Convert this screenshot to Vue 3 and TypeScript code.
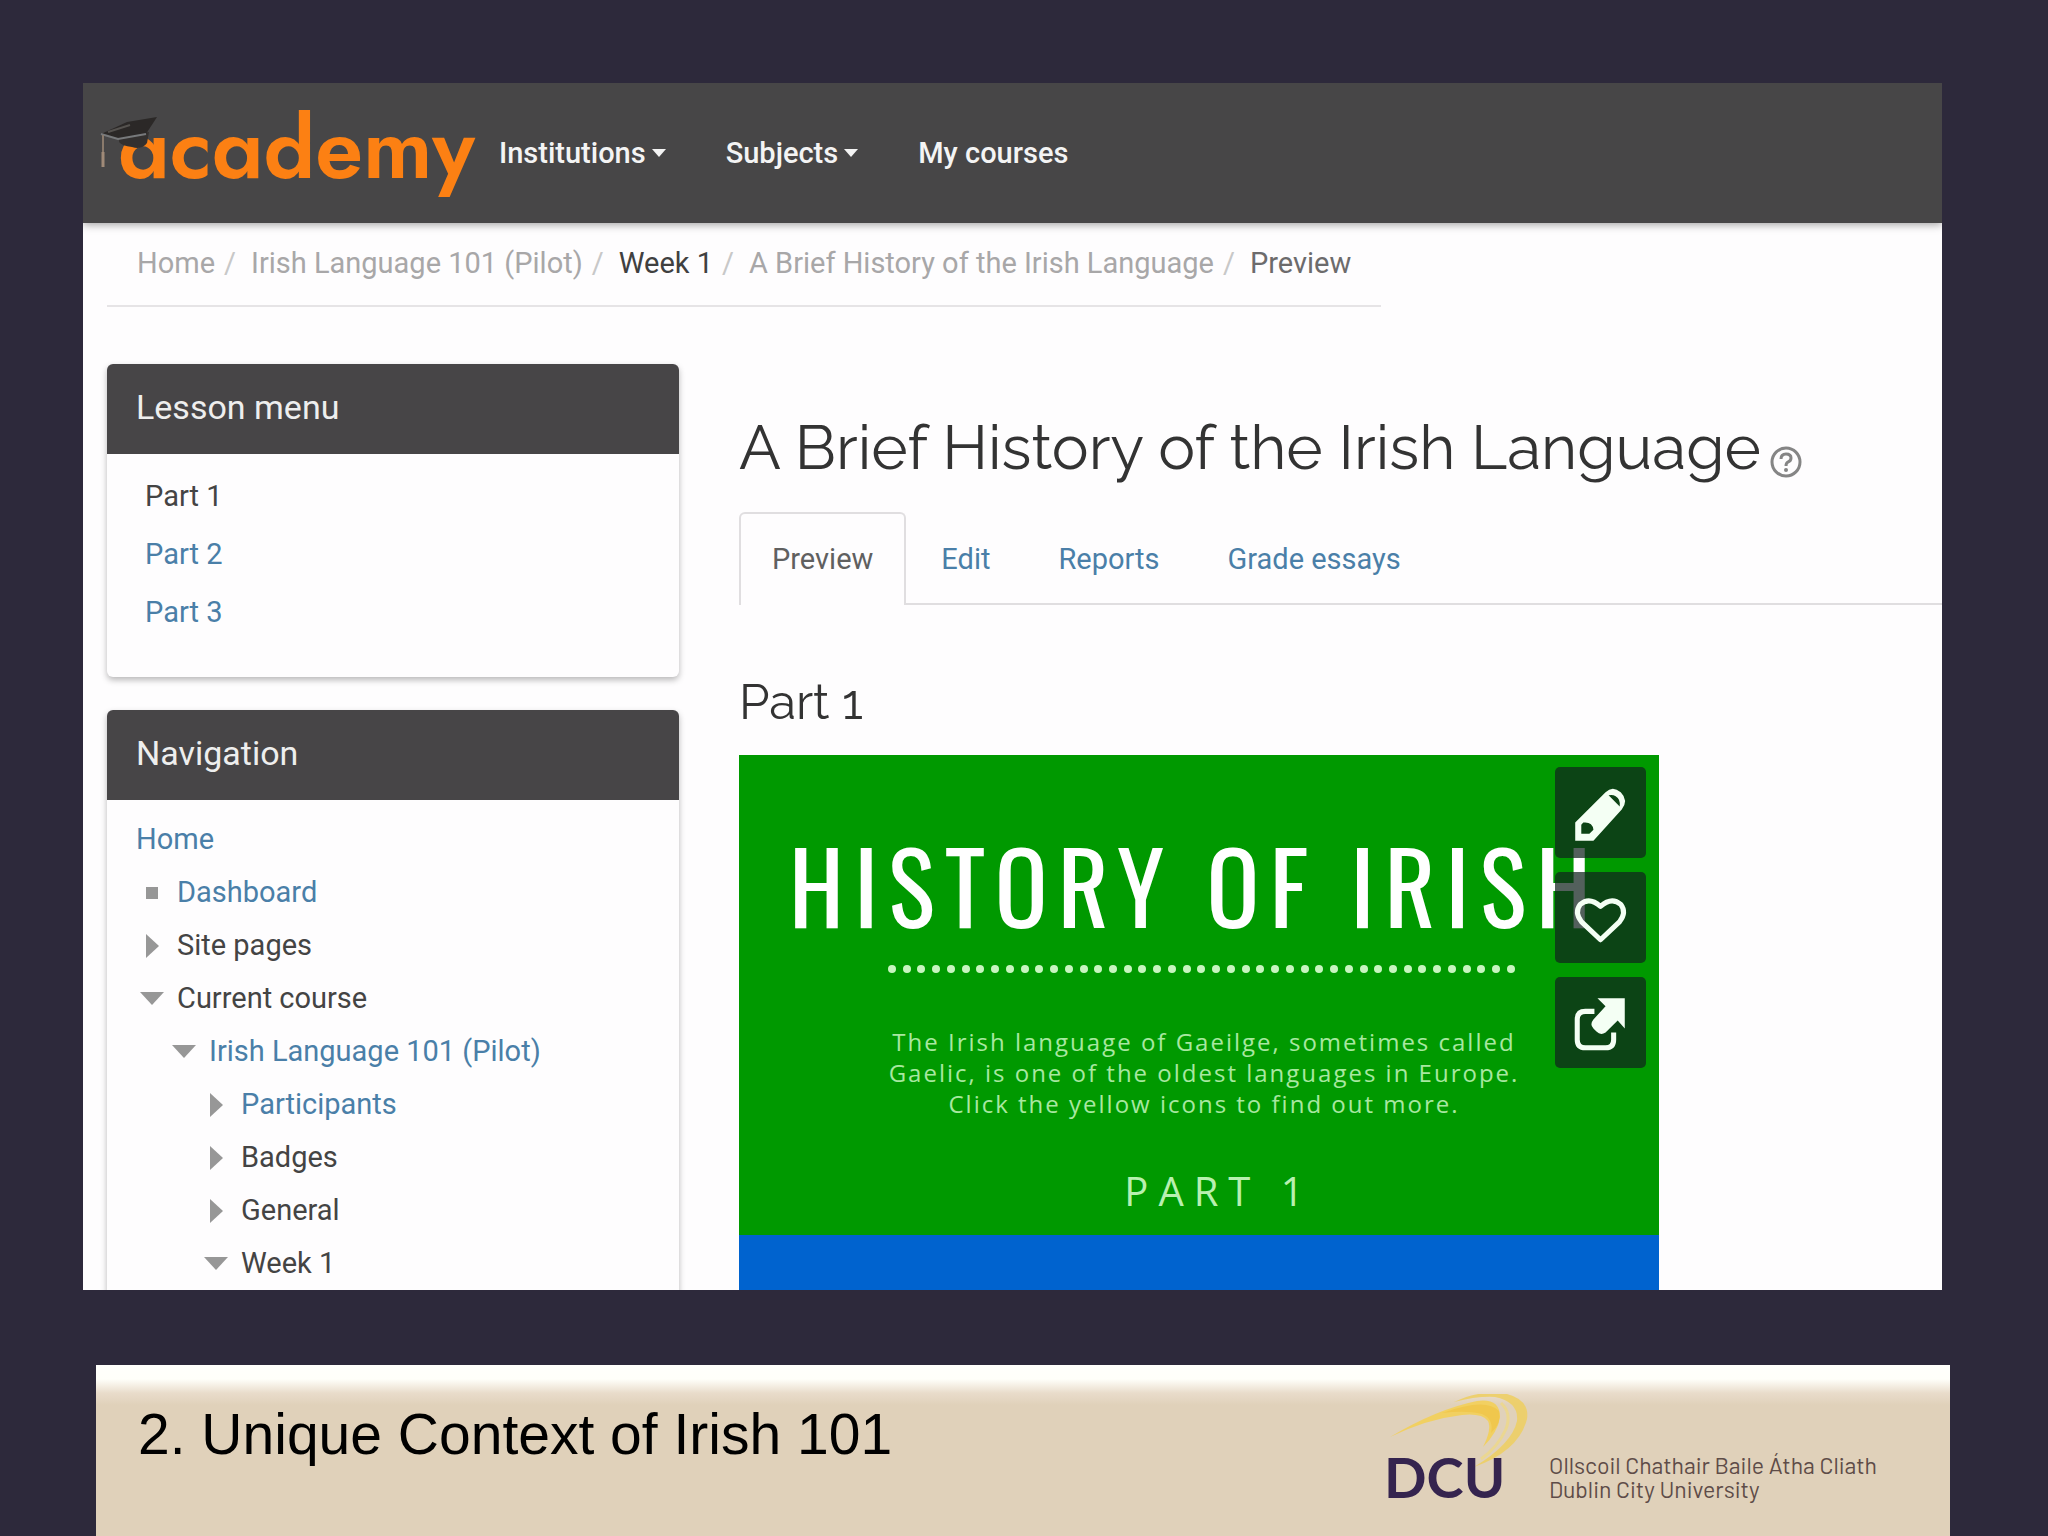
<script setup lang="ts">
interface MenuItem {
  label: string
  caret: boolean
}

interface Crumb {
  label: string
  tone: 'muted' | 'strong' | 'current'
}

interface TreeItem {
  label: string
  level: number
  marker: 'none' | 'square' | 'closed' | 'open'
  link: boolean
}

const menu: MenuItem[] = [
  { label: 'Institutions', caret: true },
  { label: 'Subjects', caret: true },
  { label: 'My courses', caret: false },
]

const crumbs: Crumb[] = [
  { label: 'Home', tone: 'muted' },
  { label: 'Irish Language 101 (Pilot)', tone: 'muted' },
  { label: 'Week 1', tone: 'strong' },
  { label: 'A Brief History of the Irish Language', tone: 'muted' },
  { label: 'Preview', tone: 'current' },
]

const parts = ['Part 1', 'Part 2', 'Part 3']
const tabs = ['Preview', 'Edit', 'Reports', 'Grade essays']

const tree: TreeItem[] = [
  { label: 'Home', level: 0, marker: 'none', link: true },
  { label: 'Dashboard', level: 0, marker: 'square', link: true },
  { label: 'Site pages', level: 0, marker: 'closed', link: false },
  { label: 'Current course', level: 0, marker: 'open', link: false },
  { label: 'Irish Language 101 (Pilot)', level: 1, marker: 'open', link: true },
  { label: 'Participants', level: 2, marker: 'closed', link: true },
  { label: 'Badges', level: 2, marker: 'closed', link: false },
  { label: 'General', level: 2, marker: 'closed', link: false },
  { label: 'Week 1', level: 2, marker: 'open', link: false },
]
</script>

<template>
  <div class="slide">
    <section class="frame">
      <header class="topbar">
        <a href="#" class="brand" aria-label="academy">
          <span class="wordmark">academy</span>
          <svg class="cap" viewBox="0 0 60 54" aria-hidden="true">
            <path d="M19 22 L49 16 L47 27 Q42 34 32 31 Q22 30 19 26 Z" fill="#33302f" />
            <path d="M1 18 L27 6 L57 1 L46 18 L18 23 Z" fill="#2b2827" />
            <path d="M1 18 L18 23 L46 18" fill="none" stroke="#77797b" stroke-width="2" />
            <path d="M8 16 L30 9" stroke="#55524f" stroke-width="2" />
            <path d="M3 19 V50" stroke="#8a7a6c" stroke-width="2" />
            <path d="M3 36 V51" stroke="#a08a78" stroke-width="3" />
          </svg>
        </a>
        <nav class="menu">
          <a v-for="item in menu" :key="item.label" href="#">
            {{ item.label }}<i v-if="item.caret" class="caret"></i>
          </a>
        </nav>
      </header>

      <nav class="crumbs" aria-label="Breadcrumb">
        <template v-for="(crumb, i) in crumbs" :key="crumb.label">
          <span v-if="i > 0" class="sep">/</span>
          <a href="#" :class="crumb.tone">{{ crumb.label }}</a>
        </template>
      </nav>

      <div class="columns">
        <aside class="sidebar">
          <section class="card">
            <h2>Lesson menu</h2>
            <ul class="parts">
              <li v-for="(part, i) in parts" :key="part">
                <span v-if="i === 0">{{ part }}</span>
                <a v-else href="#">{{ part }}</a>
              </li>
            </ul>
          </section>
          <section class="card">
            <h2>Navigation</h2>
            <ul class="tree">
              <li v-for="(item, i) in tree" :key="i" :class="'level-' + item.level">
                <span v-if="item.marker !== 'none'" class="marker"><i :class="item.marker"></i></span>
                <a v-if="item.link" href="#">{{ item.label }}</a>
                <span v-else>{{ item.label }}</span>
              </li>
            </ul>
          </section>
        </aside>

        <main class="content">
          <h1>
            A Brief History of the Irish Language
            <button class="help" aria-label="Help">
              <svg viewBox="0 0 34 34" aria-hidden="true">
                <circle cx="17" cy="17" r="14" fill="none" stroke="#858585" stroke-width="3" />
                <path d="M12 14 Q12 9 17 9 Q22 9 22 13 Q22 16 19 17 Q17 18 17 21" fill="none" stroke="#858585" stroke-width="3" />
                <circle cx="17" cy="25" r="2" fill="#858585" />
              </svg>
            </button>
          </h1>

          <nav class="tabs">
            <a v-for="(tab, i) in tabs" :key="tab" href="#" :class="{ active: i === 0 }">{{ tab }}</a>
          </nav>

          <h3>Part 1</h3>

          <article class="poster">
            <div class="poster-main">
              <p class="poster-title">HISTORY OF IRISH</p>
              <div class="dots"><i v-for="n in 43" :key="n"></i></div>
              <p class="poster-text">
                The Irish language of Gaeilge, sometimes called<br />
                Gaelic, is one of the oldest languages in Europe.<br />
                Click the yellow icons to find out more.
              </p>
              <p class="poster-part">PART 1</p>
            </div>
            <div class="tools">
              <button aria-label="Edit">
                <svg viewBox="0 0 90 90" aria-hidden="true">
                  <path fill="#f4fff4" fill-rule="evenodd" d="M20 73 V55 L50 25 Q57 18 65 25 Q73 33 66 42 L38 73 Z M26 66 H34 L38 62 Q37 54 28 55 L26 57 Z M53 28 L64 39 Q65 32 60 29 Q57 27 53 28 Z" />
                </svg>
              </button>
              <button aria-label="Like">
                <svg viewBox="0 0 90 90" aria-hidden="true">
                  <path d="M45 67 L26 49 Q19 40 25 32 Q34 24 45 34 Q56 24 65 32 Q71 40 64 49 Z" fill="none" stroke="#f4fff4" stroke-width="5" stroke-linejoin="round" />
                </svg>
              </button>
              <button aria-label="Share">
                <svg viewBox="0 0 90 90" aria-hidden="true">
                  <path d="M39 34 H30 Q22 34 22 42 V62 Q22 70 30 70 H50 Q58 70 58 62 V55" fill="none" stroke="#f4fff4" stroke-width="5" />
                  <path d="M42 21 H69 V51 L62 43 L50 55 Q45 58 41 54 L38 51 Q34 47 38 42 L50 29 Z" fill="#f4fff4" />
                </svg>
              </button>
            </div>
          </article>
        </main>
      </div>
    </section>

    <footer class="caption">
      <p class="caption-title">2. Unique Context of Irish 101</p>
      <div class="university">
        <svg class="emblem" viewBox="0 5 150 124" role="img" aria-label="DCU">
          <g opacity="0.85">
            <path d="M8 48 Q55 20 95 12 Q118 9 118 28 Q116 43 101 58 Q110 40 106 32 Q100 24 80 26 Q45 30 8 48 Z" fill="#f5d052" />
            <path d="M60 24 Q104 8 117 22 Q120 34 109 44 Q112 30 100 25 Q84 21 60 24 Z" fill="#f3c63a" />
            <path d="M72 13 Q100 0 125 5 Q148 11 145 30 Q137 62 92 78 Q130 55 135 32 Q137 13 113 8 Q95 7 72 13 Z" fill="#efcf60" />
            <path d="M119 14 Q130 24 124 40 Q116 58 99 70" fill="none" stroke="#eed98a" stroke-width="3" />
          </g>
          <text x="2" y="109" class="dcu">DCU</text>
        </svg>
        <p class="names">Ollscoil Chathair Baile Átha Cliath<br />Dublin City University</p>
      </div>
    </footer>
  </div>
</template>

<style>
body {
  margin: 0;
  background: #2d293b;
}
</style>

<style scoped>
* {
  box-sizing: border-box;
}

h1, h2, h3, p, ul {
  margin: 0;
  padding: 0;
  font-weight: 400;
}

ul {
  list-style: none;
}

a {
  color: #4a7fa8;
  text-decoration: none;
}

button {
  border: 0;
  padding: 0;
  background: none;
}

.slide {
  display: flex;
  flex-direction: column;
  height: 100vh;
  padding-top: 83px;
  background: #2d293b;
  font-family: Roboto, "Liberation Sans", sans-serif;
  font-size: 29px;
  line-height: 40px;
  color: #444;
}

.frame {
  flex: 1;
  min-height: 0;
  margin: 0 106px 75px 83px;
  overflow: hidden;
  background: #fefdfe;
}

.topbar {
  display: flex;
  align-items: center;
  height: 140px;
  padding-left: 35px;
  background: #474647;
  box-shadow: 0 2px 8px rgba(0, 0, 0, 0.35);
}

.brand {
  position: relative;
  width: 381px;
  padding-bottom: 10px;
}

.wordmark {
  font-family: Jost, Inter, sans-serif;
  font-size: 86px;
  font-weight: 600;
  line-height: 100px;
  font-feature-settings: "ss01", "cv11";
  color: #fc8013;
}

.cap {
  position: absolute;
  left: -18px;
  top: 18px;
  width: 60px;
  height: 54px;
}

.menu {
  display: flex;
  gap: 60px;
}

.menu a {
  display: flex;
  align-items: center;
  gap: 6px;
  color: #f4f4f4;
  font-weight: 500;
}

.caret {
  border: 7px solid transparent;
  border-top: 8px solid #f4f4f4;
  border-bottom: 0;
}

.crumbs {
  display: flex;
  width: fit-content;
  margin-left: 24px;
  padding: 20px 30px 22px;
  border-bottom: 2px solid #e6e4e6;
}

.crumbs .sep {
  margin: 0 15px 0 9px;
  color: #c8c8c8;
}

.crumbs .muted {
  color: #a8a7a8;
}

.crumbs .strong {
  color: #404040;
}

.crumbs .current {
  color: #6c6b6c;
}

.columns {
  display: grid;
  grid-template-columns: 572px 1fr;
  gap: 60px;
  padding: 57px 0 0 24px;
}

.sidebar {
  display: flex;
  flex-direction: column;
  gap: 33px;
}

.card {
  border-radius: 6px;
  background: #fefdfe;
  box-shadow: 0 3px 6px rgba(0, 0, 0, 0.28);
}

.card h2 {
  height: 90px;
  padding-left: 29px;
  border-radius: 6px 6px 0 0;
  background: #474547;
  color: #eee;
  font-size: 34px;
  line-height: 86px;
}

.parts {
  padding: 13px 38px 36px;
}

.parts li {
  line-height: 58px;
}

.tree {
  padding: 13px 29px 40px;
}

.tree li {
  display: flex;
  line-height: 53px;
}

.level-1 {
  padding-left: 32px;
}

.level-2 {
  padding-left: 64px;
}

.marker {
  display: flex;
  align-items: center;
  justify-content: center;
  width: 32px;
  margin-right: 9px;
}

.square {
  width: 12px;
  height: 12px;
  background: #979797;
}

.closed {
  border: 12px solid transparent;
  border-left: 13px solid #979797;
  border-right: 0;
}

.open {
  border: 12px solid transparent;
  border-top: 13px solid #979797;
  border-bottom: 0;
}

.content {
  padding-top: 44px;
}

.content h1 {
  display: flex;
  align-items: center;
  gap: 8px;
  margin-bottom: 24px;
  color: #333;
  font-family: Raleway, Lato, sans-serif;
  font-size: 62px;
  line-height: 80px;
}

.help {
  display: flex;
  margin-top: 28px;
}

.help svg {
  width: 34px;
  height: 34px;
}

.tabs {
  display: flex;
  gap: 2px;
  height: 93px;
  border-bottom: 2px solid #e0dee0;
}

.tabs a {
  height: 93px;
  padding: 25px 31px 0;
  border: 2px solid transparent;
  border-bottom: 0;
  border-radius: 6px 6px 0 0;
}

.tabs .active {
  border-color: #e0dee0;
  background: #fefdfe;
  color: #606060;
}

.content h3 {
  margin: 67px 0 23px;
  color: #333;
  font-family: Raleway, Lato, sans-serif;
  font-size: 49px;
  font-variant-numeric: oldstyle-nums;
  line-height: 60px;
}

.poster {
  position: relative;
  width: 920px;
  height: 660px;
  background: #0063cf;
}

.poster-main {
  height: 480px;
  padding-top: 79px;
  background: #009900;
  color: #fff;
  text-align: center;
}

.poster-title {
  padding-left: 50px;
  font-family: Oswald, "Roboto Condensed", "Open Sans Condensed", Roboto, sans-serif;
  font-size: 98px;
  line-height: 100px;
  letter-spacing: 10px;
  text-align: left;
  white-space: nowrap;
}

.dots {
  display: flex;
  justify-content: space-between;
  margin: 31px 144px 53px 149px;
}

.dots i {
  width: 8px;
  height: 8px;
  border-radius: 50%;
  background: #c8f5c0;
}

.poster-text {
  padding-left: 10px;
  font-family: "Open Sans", sans-serif;
  font-size: 24px;
  line-height: 31px;
  letter-spacing: 2px;
  color: #a8e8a0;
  white-space: nowrap;
}

.poster-part {
  padding-left: 40px;
  margin-top: 47px;
  font-family: "Open Sans", sans-serif;
  font-size: 40px;
  line-height: 50px;
  letter-spacing: 10px;
  color: #b8f0b0;
}

.tools {
  position: absolute;
  top: 12px;
  right: 13px;
  display: grid;
  gap: 14px;
}

.tools button {
  width: 91px;
  height: 91px;
  border-radius: 5px;
  background: rgba(17, 34, 29, 0.72);
}

.tools svg {
  display: block;
}

.caption {
  display: flex;
  justify-content: space-between;
  align-items: flex-start;
  height: 171px;
  margin: 0 98px 0 96px;
  padding: 29px 73px 0 42px;
  background: linear-gradient(#fffffc 0, #fffffa 14px, #e9dccb 28px, #e0d1ba 40px);
}

.caption-title {
  color: #000;
  font-family: "Liberation Sans", Arial, sans-serif;
  font-size: 57px;
  line-height: 80px;
}

.university {
  display: flex;
  align-items: flex-end;
  gap: 17px;
}

.emblem {
  width: 150px;
  height: 124px;
}

.dcu {
  fill: #35244f;
  font-family: Lato, sans-serif;
  font-size: 56px;
  font-weight: 700;
}

.names {
  padding-bottom: 17px;
  color: #5e4c48;
  font-family: Barlow, Roboto, sans-serif;
  font-size: 23px;
  line-height: 24px;
}
</style>
